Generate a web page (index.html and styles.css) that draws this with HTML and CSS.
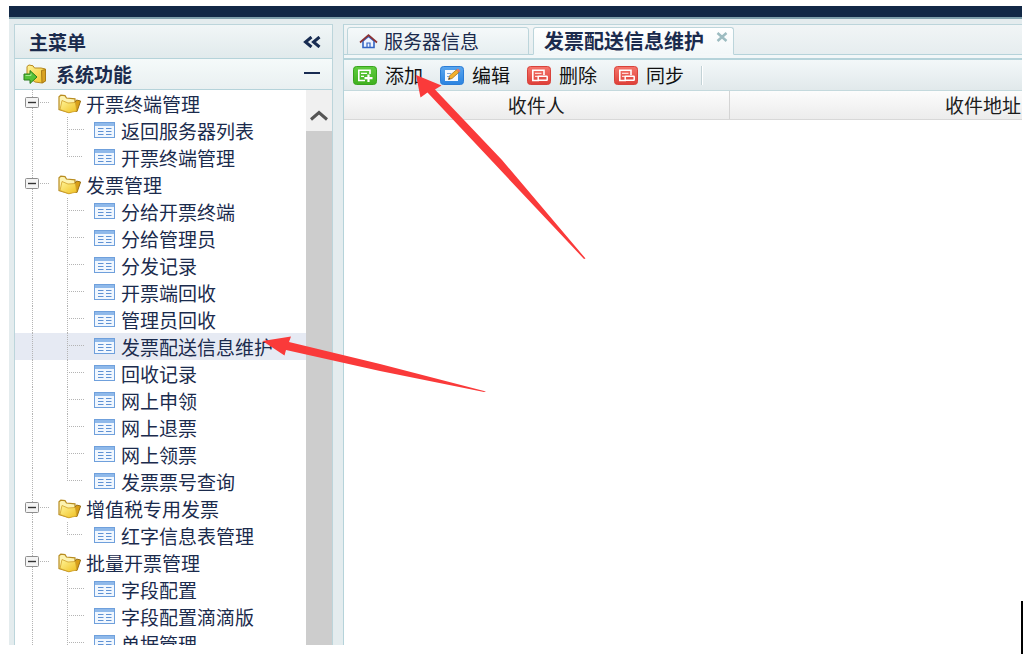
FILE: index.html
```
<!DOCTYPE html>
<html lang="zh-CN">
<head>
<meta charset="utf-8">
<title>发票配送信息维护</title>
<link rel="stylesheet" href="styles.css">
</head>
<body>
<svg class="defs" aria-hidden="true">
  <defs>
    <linearGradient id="gold" x1="0" y1="0" x2="1" y2="1"><stop offset="0" stop-color="#fff59a"/><stop offset="1" stop-color="#f0c020"/></linearGradient>
    <linearGradient id="green" x1="0" y1="0" x2="0" y2="1"><stop offset="0" stop-color="#5fcd3f"/><stop offset="1" stop-color="#3fb01f"/></linearGradient>
    <linearGradient id="blue" x1="0" y1="0" x2="0" y2="1"><stop offset="0" stop-color="#5aa6ee"/><stop offset="1" stop-color="#2b83e0"/></linearGradient>
    <linearGradient id="red" x1="0" y1="0" x2="0" y2="1"><stop offset="0" stop-color="#f5766c"/><stop offset="1" stop-color="#de3f38"/></linearGradient>
    <symbol id="guide-mid" viewBox="0 0 79 27">
      <path d="M17.5 0V27M52.5 0V27M54 12.5H70" fill="none" stroke="#b4b4b4" stroke-dasharray="1 1"/>
    </symbol>
    <symbol id="guide-end" viewBox="0 0 79 27">
      <path d="M17.5 0V27M52.5 0V13M54 12.5H67" fill="none" stroke="#b4b4b4" stroke-dasharray="1 1"/>
    </symbol>
    <symbol id="toggle" viewBox="0 0 43 27">
      <path d="M17.5 0V27M25 12.5H35" fill="none" stroke="#b4b4b4" stroke-dasharray="1 1"/>
      <rect x="10.5" y="7.5" width="13" height="10" rx="1" fill="#f4f4f4" stroke="#8e8e8e"/>
      <path d="M13 12.5H21" stroke="#333" stroke-width="1.4"/>
    </symbol>
    <symbol id="folder" viewBox="0 0 24 20">
      <path d="M1 15.500V2.800L2.800 1.200L7 1.600L8.500 4L17 4.800V16L11 18.500Z" fill="#fdf3b0" stroke="#b88c20" stroke-width="1.200"/>
      <path d="M17 8.500L18.500 6L22.600 7L19 17.500L16.500 17Z" fill="#d99f18" stroke="#9a7012"/>
      <path d="M4 6.500L10 9L17.500 8.500L18.800 17L10.800 18.700L2 15.500Z" fill="url(#gold)" stroke="#cfa028" stroke-width=".8"/>
    </symbol>
    <symbol id="page" viewBox="0 0 21 17">
      <rect x=".5" y=".5" width="20" height="15" fill="#f1f7fe" stroke="#6fa0dc"/>
      <rect x="1" y="1" width="19" height="3" fill="#8fb9ea"/>
      <path d="M4 6.500H9.500M12 6.500H17.500M4 9.500H9.500M12 9.500H17.500M4 12.500H9.500M12 12.500H17.500" stroke="#5f92d4"/>
    </symbol>
    <symbol id="remove" viewBox="0 0 24 19">
      <rect x=".5" y=".5" width="23" height="18" rx="3" fill="url(#red)" stroke="#d8423b"/>
      <path d="M17 9V4.200H5.800V14.500H12" fill="none" stroke="#fff" stroke-width="1.600"/>
      <path d="M8 7.300H14.500M8 10.300H11" stroke="#ffd9d5" stroke-width="1.200"/>
      <rect x="11.200" y="10.200" width="9" height="4" rx=".5" fill="#e4524a" stroke="#fff" stroke-width="1.500"/>
    </symbol>
  </defs>
</svg>

<div class="app">
  <div class="topbar"></div>
  <div class="workspace">
    <aside class="sidebar">
      <header class="side-head">
        <h1>主菜单</h1>
        <button type="button" class="icon-btn" aria-label="收起菜单">
          <svg width="18" height="12" viewBox="0 0 18 12"><path d="M8.500 1L2.500 6L8.500 11M16.500 1L10.500 6L16.500 11" fill="none" stroke="#182c52" stroke-width="3"/></svg>
        </button>
      </header>
      <header class="side-head section">
        <svg width="25" height="20" viewBox="0 0 25 20">
          <path d="M4 12V2.500L6 1L10 1.800L11.500 4H18L22.500 5V17L19 19L12 18Z" fill="url(#gold)" stroke="#b88a20"/>
          <path d="M18.500 6.500L22.500 5.500V17L19 19Z" fill="#d9a322" stroke="#a97b17"/>
          <path d="M1 10H7V6.500L14 13L7 19.500V16H1Z" fill="#55c238" stroke="#2b7f1c"/>
          <path d="M2.500 11.500H8V9.500" fill="none" stroke="#a6e88f"/>
        </svg>
        <h2>系统功能</h2>
        <button type="button" class="icon-btn" aria-label="折叠系统功能">
          <svg width="18" height="12" viewBox="0 0 18 12"><path d="M1 5H17" stroke="#182c52" stroke-width="2"/></svg>
        </button>
      </header>
      <div class="side-body">
        <nav class="tree" aria-label="系统功能">
          <ul>
            <li>
              <button type="button" class="row"><svg width="43" height="27"><use href="#toggle"/></svg><svg class="folder" width="24" height="20"><use href="#folder"/></svg>开票终端管理</button>
              <ul>
                <li><a href="#" class="row leaf"><svg width="79" height="27"><use href="#guide-mid"/></svg><svg class="page" width="21" height="17"><use href="#page"/></svg>返回服务器列表</a></li>
                <li><a href="#" class="row leaf"><svg width="79" height="27"><use href="#guide-end"/></svg><svg class="page" width="21" height="17"><use href="#page"/></svg>开票终端管理</a></li>
              </ul>
            </li>
            <li>
              <button type="button" class="row"><svg width="43" height="27"><use href="#toggle"/></svg><svg class="folder" width="24" height="20"><use href="#folder"/></svg>发票管理</button>
              <ul>
                <li><a href="#" class="row leaf"><svg width="79" height="27"><use href="#guide-mid"/></svg><svg class="page" width="21" height="17"><use href="#page"/></svg>分给开票终端</a></li>
                <li><a href="#" class="row leaf"><svg width="79" height="27"><use href="#guide-mid"/></svg><svg class="page" width="21" height="17"><use href="#page"/></svg>分给管理员</a></li>
                <li><a href="#" class="row leaf"><svg width="79" height="27"><use href="#guide-mid"/></svg><svg class="page" width="21" height="17"><use href="#page"/></svg>分发记录</a></li>
                <li><a href="#" class="row leaf"><svg width="79" height="27"><use href="#guide-mid"/></svg><svg class="page" width="21" height="17"><use href="#page"/></svg>开票端回收</a></li>
                <li><a href="#" class="row leaf"><svg width="79" height="27"><use href="#guide-mid"/></svg><svg class="page" width="21" height="17"><use href="#page"/></svg>管理员回收</a></li>
                <li><a href="#" class="row leaf selected" aria-current="page"><svg width="79" height="27"><use href="#guide-mid"/></svg><svg class="page" width="21" height="17"><use href="#page"/></svg>发票配送信息维护</a></li>
                <li><a href="#" class="row leaf"><svg width="79" height="27"><use href="#guide-mid"/></svg><svg class="page" width="21" height="17"><use href="#page"/></svg>回收记录</a></li>
                <li><a href="#" class="row leaf"><svg width="79" height="27"><use href="#guide-mid"/></svg><svg class="page" width="21" height="17"><use href="#page"/></svg>网上申领</a></li>
                <li><a href="#" class="row leaf"><svg width="79" height="27"><use href="#guide-mid"/></svg><svg class="page" width="21" height="17"><use href="#page"/></svg>网上退票</a></li>
                <li><a href="#" class="row leaf"><svg width="79" height="27"><use href="#guide-mid"/></svg><svg class="page" width="21" height="17"><use href="#page"/></svg>网上领票</a></li>
                <li><a href="#" class="row leaf"><svg width="79" height="27"><use href="#guide-end"/></svg><svg class="page" width="21" height="17"><use href="#page"/></svg>发票票号查询</a></li>
              </ul>
            </li>
            <li>
              <button type="button" class="row"><svg width="43" height="27"><use href="#toggle"/></svg><svg class="folder" width="24" height="20"><use href="#folder"/></svg>增值税专用发票</button>
              <ul>
                <li><a href="#" class="row leaf"><svg width="79" height="27"><use href="#guide-end"/></svg><svg class="page" width="21" height="17"><use href="#page"/></svg>红字信息表管理</a></li>
              </ul>
            </li>
            <li>
              <button type="button" class="row"><svg width="43" height="27"><use href="#toggle"/></svg><svg class="folder" width="24" height="20"><use href="#folder"/></svg>批量开票管理</button>
              <ul>
                <li><a href="#" class="row leaf"><svg width="79" height="27"><use href="#guide-mid"/></svg><svg class="page" width="21" height="17"><use href="#page"/></svg>字段配置</a></li>
                <li><a href="#" class="row leaf"><svg width="79" height="27"><use href="#guide-mid"/></svg><svg class="page" width="21" height="17"><use href="#page"/></svg>字段配置滴滴版</a></li>
                <li><a href="#" class="row leaf"><svg width="79" height="27"><use href="#guide-mid"/></svg><svg class="page" width="21" height="17"><use href="#page"/></svg>单据管理</a></li>
              </ul>
            </li>
          </ul>
        </nav>
        <div class="scrollbar">
          <div class="scroll-up"><svg width="18" height="11" viewBox="0 0 18 11"><path d="M1 9.500L9 2.500L17 9.500" fill="none" stroke="#555" stroke-width="3"/></svg></div>
          <div class="thumb"></div>
        </div>
      </div>
    </aside>

    <main class="content">
      <div class="tabs">
        <button type="button" class="tab">
          <svg width="19" height="15" viewBox="0 0 19 15">
            <path d="M4 7V13.500H15V7L9.500 2.500Z" fill="#eef4ff" stroke="#3464c4" stroke-width="1.600"/>
            <path d="M8 13V9H11V13" fill="none" stroke="#3464c4" stroke-width="1.200"/>
            <path d="M1 8.500L9.500 1.200L18 8.500" fill="none" stroke="#8c3232" stroke-width="1.700"/>
          </svg>服务器信息
        </button>
        <div class="tab active">
          <span>发票配送信息维护</span>
          <button type="button" class="close" aria-label="关闭"><svg width="12" height="10" viewBox="0 0 12 10"><path d="M1.500 1L10.500 9M10.500 1L1.500 9" stroke="#9dbcc1" stroke-width="2.500"/></svg></button>
        </div>
      </div>
      <div class="tab-strip"></div>
      <div class="toolbar">
        <button type="button" class="tool">
          <svg width="24" height="19" viewBox="0 0 24 19">
            <rect x=".5" y=".5" width="23" height="18" rx="3" fill="url(#green)" stroke="#38a31e"/>
            <path d="M12 14.500H5.800V4.200H17V8" fill="none" stroke="#fff" stroke-width="1.600"/>
            <path d="M8 7.300H14M8 10.300H11" stroke="#fff" stroke-width="1.200"/>
            <path d="M15.500 8.500V16M11.500 12.200H19.500" stroke="#fff" stroke-width="2.200"/>
          </svg>添加
        </button>
        <button type="button" class="tool">
          <svg width="24" height="19" viewBox="0 0 24 19">
            <rect x=".5" y=".5" width="23" height="18" rx="3" fill="url(#blue)" stroke="#2a7cd6"/>
            <rect x="5" y="4" width="13" height="11" fill="#f4f8ff"/>
            <path d="M7 7.500H11M7 10.500H9" stroke="#7fa9dd"/>
            <path d="M8.500 13.500L9.500 9.800L16.500 3.800L19 6.300L12 12.500Z" fill="#f5b02c" stroke="#9b671c" stroke-width=".7"/>
            <path d="M16.500 3.800L18 2.500L20.500 5L19 6.300Z" fill="#e8786a"/>
            <path d="M8.500 13.500L9 11.700L10.500 13Z" fill="#333"/>
          </svg>编辑
        </button>
        <button type="button" class="tool"><svg width="24" height="19"><use href="#remove"/></svg>删除</button>
        <button type="button" class="tool"><svg width="24" height="19"><use href="#remove"/></svg>同步</button>
        <span class="separator"></span>
      </div>
      <div class="grid">
        <table>
          <colgroup><col class="col-name"><col class="col-address"></colgroup>
          <thead><tr><th scope="col">收件人</th><th scope="col">收件地址</th></tr></thead>
        </table>
      </div>
    </main>
  </div>
</div>

<svg class="arrows" width="1030" height="654" viewBox="0 0 1030 654" aria-hidden="true">
  <path d="M416 75L441.500 85.500L435 89.500L502 160L585.500 258.500L584 259L427.500 92.500L420.500 97.500Z" fill="#fa3a3a"/>
  <path d="M262.500 341L291 336.500L289 342L380 364L486 391.500L484 392L380 371L286 350L284.500 355.500Z" fill="#fa3a3a"/>
</svg>
<div class="edge-mark"></div>
</body>
</html>
```
FILE: styles.css
```
* { box-sizing: border-box; }

body {
  margin: 0;
  height: 100vh;
  padding: 6px 8px 9px 9px;
  overflow: hidden;
  background: #fff;
  color: #1b2b4d;
  font: 19px/26px "Noto Sans CJK SC", sans-serif;
}

button {
  margin: 0;
  padding: 0;
  border: 0;
  background: none;
  color: inherit;
  font: inherit;
  cursor: pointer;
}

a { color: inherit; text-decoration: none; }
ul { margin: 0; padding: 0; list-style: none; }
svg { display: block; flex: none; }
.defs { position: absolute; width: 0; height: 0; }

.app {
  display: flex;
  flex-direction: column;
  height: 100%;
  overflow: hidden;
  background: #e4ecee;
}

.topbar {
  flex: none;
  height: 13px;
  background: #122846;
  border-bottom: 2px solid #7fa0ac;
}

.workspace {
  flex: 1;
  display: flex;
  gap: 10px;
  min-height: 0;
  padding: 5px 0 0 5px;
}

.sidebar {
  flex: none;
  display: flex;
  flex-direction: column;
  width: 319px;
  border: 1px solid #bcd5db;
  border-bottom: 0;
  background: #fff;
}

.side-head {
  flex: none;
  display: flex;
  align-items: center;
  height: 34px;
  padding: 0 11px 0 14px;
  border-bottom: 1px solid #b5d3da;
  background: linear-gradient(#f1f6f7, #e1eaec);
}

.side-head.section {
  gap: 8px;
  height: 31px;
  padding-left: 8px;
  background: linear-gradient(#f5fafa, #e9f0f1);
}

.side-head h1,
.side-head h2 {
  flex: 1;
  margin: 0;
  font-size: 19px;
  font-weight: 700;
}

.side-body { flex: 1; display: flex; min-height: 0; }
.tree { flex: 1; overflow: hidden; }

.row {
  display: flex;
  align-items: center;
  width: 100%;
  height: 27px;
  text-align: left;
  white-space: nowrap;
}

.folder { margin-right: 4px; }
.page { margin-right: 6px; }
.selected { background: #e6eaf3; }

.scrollbar {
  flex: none;
  display: flex;
  flex-direction: column;
  width: 26px;
  background: #f0f0f0;
}

.scroll-up {
  display: flex;
  align-items: center;
  justify-content: center;
  height: 41px;
  padding-top: 10px;
}

.thumb { flex: 1; background: #cdcdcd; }

.content {
  flex: 1;
  display: flex;
  flex-direction: column;
  min-width: 0;
  border-left: 1px solid #b5d3da;
  border-top: 1px solid #bcd5db;
  background: #fff;
}

.tabs {
  flex: none;
  display: flex;
  gap: 4px;
  height: 30px;
  padding: 2px 0 0 3px;
  border-bottom: 1px solid #b5d3da;
  background: linear-gradient(#f1f5f6, #e6edef);
}

.tab {
  display: flex;
  align-items: center;
  gap: 6px;
  width: 182px;
  height: 28px;
  padding: 0 0 0 11px;
  border: 1px solid #bcd5db;
  border-radius: 3px 3px 0 0;
  background: linear-gradient(#f5f9fa, #e6eef0);
}

.tab.active {
  justify-content: space-between;
  width: 201px;
  padding: 0 5px 0 10px;
  border-bottom-color: #f4f8f9;
  background: linear-gradient(#fff, #f2f7f8);
  font-size: 20px;
  font-weight: 700;
}

.close { align-self: flex-start; padding-top: 4px; }

.tab-strip {
  flex: none;
  height: 5px;
  background: #f2f7f8;
  border-bottom: 2px solid #b5d3da;
}

.toolbar {
  flex: none;
  display: flex;
  align-items: center;
  gap: 17px;
  height: 31px;
  padding-left: 9px;
  border-bottom: 1px solid #c4d9dd;
  background: linear-gradient(#f3f8f9, #e1e9eb);
  color: #111;
}

.tool { display: flex; align-items: center; gap: 8px; }

.separator {
  width: 2px;
  height: 19px;
  border-left: 1px solid #c2d2d6;
  border-right: 1px solid #fff;
}

.grid { flex: 1; overflow: hidden; }

table { width: 893px; border-collapse: collapse; table-layout: fixed; }
.col-name { width: 385px; }
.col-address { width: 508px; }

thead tr { background: linear-gradient(#fcfcfc, #ececec); }

th {
  height: 28px;
  padding: 0;
  border-right: 1px solid #d4d4d4;
  border-bottom: 1px solid #d8d8d8;
  color: #1c1c1c;
  font-weight: 400;
}

.arrows { position: absolute; top: 0; left: 0; pointer-events: none; }

.edge-mark {
  position: absolute;
  right: 7px;
  bottom: 0;
  width: 2px;
  height: 53px;
  background: #000;
}
```
